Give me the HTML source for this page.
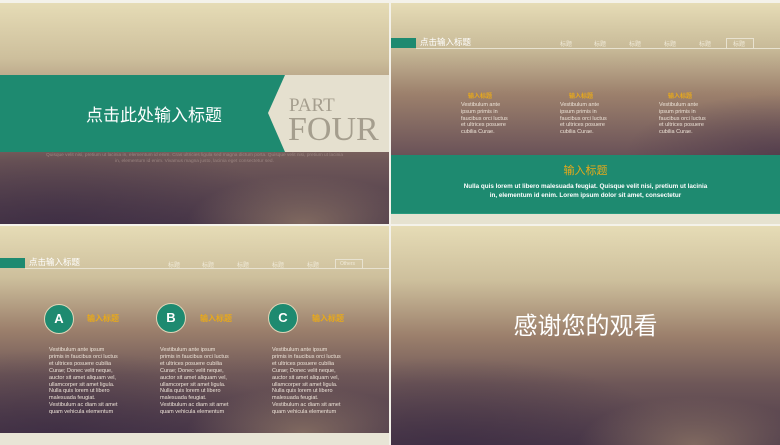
<!DOCTYPE html>
<html><head><meta charset="utf-8"><style>
*{margin:0;padding:0;box-sizing:border-box}
body{width:780px;height:445px;background:#f4f2ea;position:relative;overflow:hidden;font-family:"Liberation Sans","Noto Sans CJK SC",sans-serif}
.s{position:absolute;overflow:hidden}
.bg{position:absolute;left:0;top:0;width:100%;height:100%;
background:
radial-gradient(ellipse 30% 22% at 78% 100%,rgba(150,125,105,.7),rgba(150,125,105,0)),
radial-gradient(ellipse 60% 40% at 15% 100%,rgba(55,40,65,.6),rgba(55,40,65,0)),
linear-gradient(180deg,#e6dcb6 0%,#cdbf9c 25%,#9c806c 50%,#6e5758 72%,#4c3a4a 100%);}
.abs{position:absolute;white-space:nowrap}
.lat{font-family:"Liberation Sans",sans-serif}
.or{color:#e8a91a;font-weight:bold}
.tx{color:#eee4d8;font-size:5.5px;line-height:6.8px;white-space:normal}
.tab{position:absolute;color:#f0ead8;font-size:6px}
</style></head><body>

<!-- slide 1 -->
<div class="s" style="left:0;top:3px;width:389px;height:221px">
 <div class="bg"></div>
 <div class="abs" style="left:0;top:72px;width:389px;height:77px;background:#1e8a70"></div>
 <svg class="abs" style="left:0;top:72px" width="389" height="77"><polygon points="285,0 389,0 389,77 285,77 268,38" fill="#e5e0cf"/></svg>
 <div class="abs" style="left:86px;top:98px;color:#fff;font-size:17px">点击此处输入标题</div>
 <div class="abs" style="left:289px;top:92px;color:#a59e8e;font-family:'Liberation Serif',serif;font-size:19px">PART</div>
 <div class="abs" style="left:288px;top:108px;color:#a59e8e;font-family:'Liberation Serif',serif;font-size:34px">FOUR</div>
 <div class="abs lat" style="left:0;width:389px;top:150px;text-align:center;color:#9a8480;font-size:4.8px;line-height:6px">Quisque velit nisi, pretium ut lacinia in, elementum id enim. Cras ultricies ligula sed magna dictum porta. Quisque velit nisi, pretium ut lacinia<br>in, elementum id enim. Vivamus magna justo, lacinia eget consectetur sed.</div>
</div>

<!-- slide 2 -->
<div class="s" style="left:391px;top:3px;width:389px;height:221px">
 <div class="bg" style="height:152px;background:radial-gradient(ellipse 40% 40% at 100% 100%,rgba(70,50,70,.6),rgba(70,50,70,0)),linear-gradient(180deg,#e6dcb6 0%,#c8ba98 30%,#9c806c 60%,#6a5258 100%)"></div>
 <div class="abs" style="left:0;top:35px;width:25px;height:10px;background:#1e8a70"></div>
 <div class="abs" style="left:25px;top:45px;width:364px;height:1px;background:#e8e2d0"></div>
 <div class="abs" style="left:29px;top:33px;color:#fff;font-size:8.5px">点击输入标题</div>
 <div class="tab" style="left:169px;top:36px">标题</div>
 <div class="tab" style="left:203px;top:36px">标题</div>
 <div class="tab" style="left:238px;top:36px">标题</div>
 <div class="tab" style="left:273px;top:36px">标题</div>
 <div class="tab" style="left:308px;top:36px">标题</div>
 <div class="abs" style="left:335px;top:35px;width:28px;height:11px;border:1px solid #e8e2d0;border-bottom:none"></div>
 <div class="tab" style="left:342px;top:36px">标题</div>
 <div class="abs or" style="left:77px;top:88px;font-size:6px">输入标题</div>
 <div class="abs or" style="left:178px;top:88px;font-size:6px">输入标题</div>
 <div class="abs or" style="left:277px;top:88px;font-size:6px">输入标题</div>
 <div class="abs tx lat" style="left:70px;top:99px;width:48px">Vestibulum ante ipsum primis in faucibus orci luctus et ultrices posuere cubilia Curae.</div>
 <div class="abs tx lat" style="left:169px;top:99px;width:48px">Vestibulum ante ipsum primis in faucibus orci luctus et ultrices posuere cubilia Curae.</div>
 <div class="abs tx lat" style="left:268px;top:99px;width:48px">Vestibulum ante ipsum primis in faucibus orci luctus et ultrices posuere cubilia Curae.</div>
 <div class="abs" style="left:0;top:152px;width:389px;height:58px;background:#1e8a70"></div>
 <div class="abs" style="left:0;top:210px;width:389px;height:1px;background:#2a9a7e"></div>
 <div class="abs" style="left:0;top:211px;width:389px;height:10px;background:#e6e2d0"></div>
 <div class="abs" style="left:0;width:389px;top:159px;text-align:center;color:#e8a91a;font-size:11px">输入标题</div>
 <div class="abs lat" style="left:0;width:389px;top:179px;text-align:center;color:#fff;font-size:6.3px;line-height:9px;font-weight:bold">Nulla quis lorem ut libero malesuada feugiat. Quisque velit nisi, pretium ut lacinia<br>in, elementum id enim. Lorem ipsum dolor sit amet, consectetur</div>
</div>

<!-- slide 3 -->
<div class="s" style="left:0;top:226px;width:389px;height:219px">
 <div class="bg" style="height:207px"></div>
 <div class="abs" style="left:0;top:207px;width:389px;height:12px;background:#e8e5d6"></div>
 <div class="abs" style="left:0;top:32px;width:25px;height:10px;background:#1e8a70"></div>
 <div class="abs" style="left:25px;top:42px;width:364px;height:1px;background:#e8e2d0"></div>
 <div class="abs" style="left:29px;top:30px;color:#fff;font-size:8.5px">点击输入标题</div>
 <div class="tab" style="left:168px;top:34px">标题</div>
 <div class="tab" style="left:202px;top:34px">标题</div>
 <div class="tab" style="left:237px;top:34px">标题</div>
 <div class="tab" style="left:272px;top:34px">标题</div>
 <div class="tab" style="left:307px;top:34px">标题</div>
 <div class="abs" style="left:335px;top:33px;width:28px;height:10px;border:1px solid #e8e2d0;border-bottom:none"></div>
 <div class="tab lat" style="left:340px;top:35px;font-size:5px">Others</div>
 <div class="abs" style="left:44px;top:78px;width:30px;height:30px;border-radius:50%;background:#1e8a70;border:1.5px solid #e0d6b8;color:#fff;font-weight:bold;font-size:13px;text-align:center;line-height:27px">A</div>
 <div class="abs" style="left:156px;top:77px;width:30px;height:30px;border-radius:50%;background:#1e8a70;border:1.5px solid #e0d6b8;color:#fff;font-weight:bold;font-size:13px;text-align:center;line-height:27px">B</div>
 <div class="abs" style="left:268px;top:77px;width:30px;height:30px;border-radius:50%;background:#1e8a70;border:1.5px solid #e0d6b8;color:#fff;font-weight:bold;font-size:13px;text-align:center;line-height:27px">C</div>
 <div class="abs or" style="left:87px;top:87px;font-size:8px">输入标题</div>
 <div class="abs or" style="left:200px;top:87px;font-size:8px">输入标题</div>
 <div class="abs or" style="left:312px;top:87px;font-size:8px">输入标题</div>
 <div class="abs tx lat" style="left:49px;top:121px;width:70px;line-height:6.9px">Vestibulum ante ipsum primis in faucibus orci luctus et ultrices posuere cubilia Curae; Donec velit neque, auctor sit amet aliquam vel, ullamcorper sit amet ligula. Nulla quis lorem ut libero malesuada feugiat. Vestibulum ac diam sit amet quam vehicula elementum</div>
 <div class="abs tx lat" style="left:160px;top:121px;width:70px;line-height:6.9px">Vestibulum ante ipsum primis in faucibus orci luctus et ultrices posuere cubilia Curae; Donec velit neque, auctor sit amet aliquam vel, ullamcorper sit amet ligula. Nulla quis lorem ut libero malesuada feugiat. Vestibulum ac diam sit amet quam vehicula elementum</div>
 <div class="abs tx lat" style="left:272px;top:121px;width:70px;line-height:6.9px">Vestibulum ante ipsum primis in faucibus orci luctus et ultrices posuere cubilia Curae; Donec velit neque, auctor sit amet aliquam vel, ullamcorper sit amet ligula. Nulla quis lorem ut libero malesuada feugiat. Vestibulum ac diam sit amet quam vehicula elementum</div>
</div>

<!-- slide 4 -->
<div class="s" style="left:391px;top:226px;width:389px;height:219px">
 <div class="bg"></div>
 <div class="abs" style="left:0;width:389px;top:80px;text-align:center;color:#fff;font-size:24px">感谢您的观看</div>
</div>
</body></html>
